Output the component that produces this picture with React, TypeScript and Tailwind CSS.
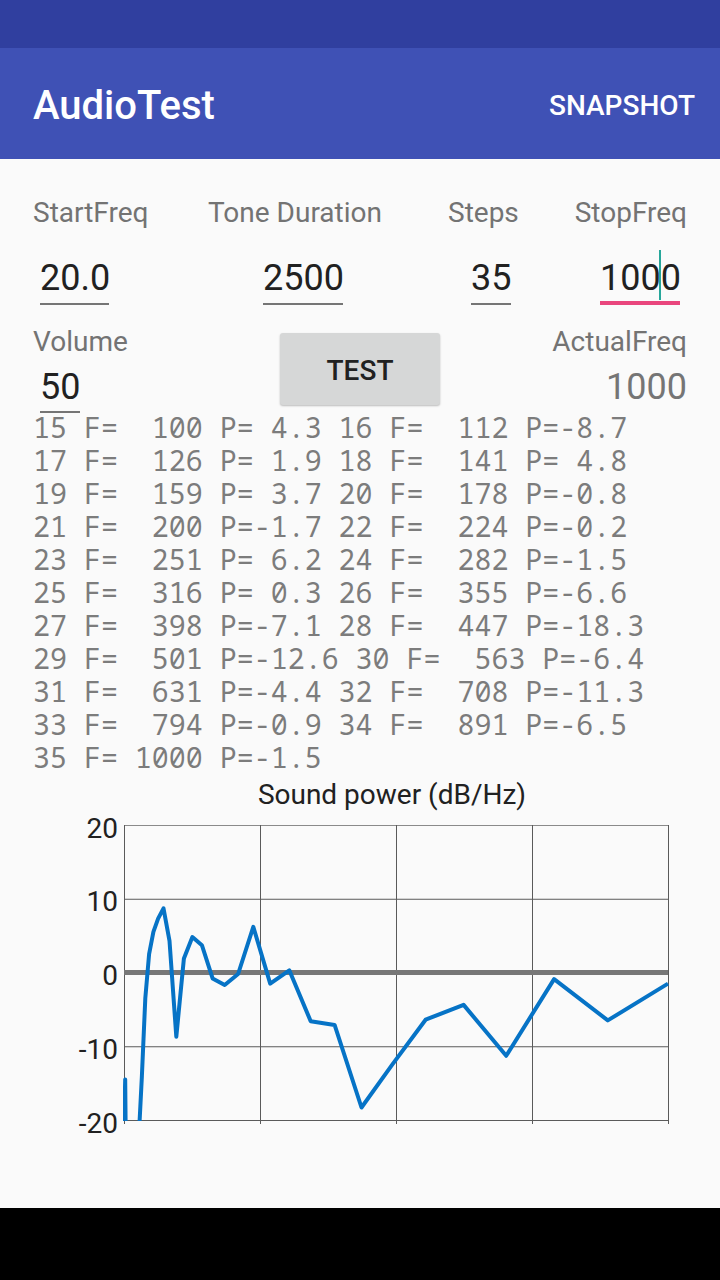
import React from 'react'

const results = [
  '15 F=  100 P= 4.3 16 F=  112 P=-8.7',
  '17 F=  126 P= 1.9 18 F=  141 P= 4.8',
  '19 F=  159 P= 3.7 20 F=  178 P=-0.8',
  '21 F=  200 P=-1.7 22 F=  224 P=-0.2',
  '23 F=  251 P= 6.2 24 F=  282 P=-1.5',
  '25 F=  316 P= 0.3 26 F=  355 P=-6.6',
  '27 F=  398 P=-7.1 28 F=  447 P=-18.3',
  '29 F=  501 P=-12.6 30 F=  563 P=-6.4',
  '31 F=  631 P=-4.4 32 F=  708 P=-11.3',
  '33 F=  794 P=-0.9 34 F=  891 P=-6.5',
  '35 F= 1000 P=-1.5',
]

// power per step, 0..35 (first 15 read off the plot)
const power = [
  -21, -14.5, -35, -35, -35, -35, -35, -35, -22, -14, -3.5, 2.5, 5.5, 7.3, 8.7,
  4.3, -8.7, 1.9, 4.8, 3.7, -0.8, -1.7, -0.2, 6.2, -1.5, 0.3, -6.6, -7.1, -18.3,
  -12.6, -6.4, -4.4, -11.3, -0.9, -6.5, -1.5,
]

function Field({ value, width, ml }: { value: string; width: string; ml: string }) {
  return (
    <div className={`${ml} ${width} pb-[6px] border-b-2 border-[#757575] text-[36px] leading-[36px] text-[#212121]`}>
      {value}
    </div>
  )
}

function PowerChart() {
  const top = 12
  const bottom = 307
  const left = 124
  const right = 668
  const yOf = (p: number) => top + ((20 - p) * (bottom - top)) / 40
  const xOf = (f: number) => left + ((f - 17.78) / (1000 - 17.78)) * (right - left)
  const points = power
    .map((p, n) => `${xOf(1000 * Math.pow(10, (n - 35) / 20)).toFixed(1)},${yOf(p).toFixed(1)}`)
    .join(' ')
  const cols = [124, 260, 396, 532, 668]
  const ticks = [20, 10, 0, -10, -20]

  return (
    <svg width="720" height="395" viewBox="0 0 720 395" className="block">
      <defs>
        <clipPath id="plot">
          <rect x={left - 1} y={top} width={right - left + 2} height={bottom - top + 1} />
        </clipPath>
      </defs>
      {ticks.map((t) => (
        <g key={t}>
          {t !== 0 && (
            <line x1={left} x2={right} y1={yOf(t) + 0.5} y2={yOf(t) + 0.5} stroke={t === 20 ? '#8a8a8a' : '#5a5a5a'} strokeWidth="1" />
          )}
          <text
            x="118"
            y={yOf(t) + 3}
            textAnchor="end"
            dominantBaseline="central"
            fontFamily="Roboto, sans-serif"
            fontSize="28"
            fill="#212121"
          >
            {t}
          </text>
        </g>
      ))}
      {cols.map((x) => (
        <line key={x} x1={x + 0.5} x2={x + 0.5} y1={top} y2={bottom + 4} stroke="#5a5a5a" strokeWidth="1" />
      ))}
      <line x1={left} x2={right} y1={yOf(0)} y2={yOf(0)} stroke="#777777" strokeWidth="5" />
      <polyline
        points={points}
        fill="none"
        stroke="#0673c6"
        strokeWidth="4"
        strokeLinejoin="round"
        clipPath="url(#plot)"
      />
    </svg>
  )
}

export default function App() {
  return (
    <div className="w-[720px] h-[1280px] flex flex-col bg-[#fafafa] font-[Roboto,sans-serif]">
      <div className="h-[48px] bg-[#303f9f]" />
      <div className="h-[112px] bg-[#3f51b5] flex items-center justify-between pl-[33px] pr-[25px] pt-[4px] text-white">
        <span className="text-[40px] font-medium">AudioTest</span>
        <span className="text-[28px] font-medium">SNAPSHOT</span>
      </div>

      <main className="flex-1 flex flex-col pt-[40px]">
        {/* labels */}
        <div className="flex px-[33px] text-[28px] leading-[28px] text-[#737373]">
          <span className="w-[175px]">StartFreq</span>
          <span className="w-[240px]">Tone Duration</span>
          <span>Steps</span>
          <span className="flex-1 text-right">StopFreq</span>
        </div>

        {/* inputs */}
        <div className="flex mt-[33px]">
          <Field value="20.0" width="w-[69px]" ml="ml-[40px]" />
          <Field value="2500" width="w-[80px]" ml="ml-[154px]" />
          <Field value="35" width="w-[40px]" ml="ml-[128px]" />
          <div className="relative ml-[89px] w-[80px] pb-[5px] border-b-4 border-[#e9467d] text-[36px] leading-[36px] text-[#212121]">
            1000
            <span className="absolute left-[59px] top-[-10px] w-[2px] h-[50px] bg-[#26a69a]" />
          </div>
        </div>

        {/* volume / test / actual */}
        <div className="flex items-start mt-[23px] px-[33px]">
          <div className="w-[247px] flex flex-col items-start">
            <span className="text-[28px] leading-[28px] text-[#737373]">Volume</span>
            <div className="mt-[13px] ml-[7px] w-[40px] pb-[6px] border-b-2 border-[#757575] text-[36px] leading-[36px] text-[#212121]">
              50
            </div>
          </div>
          <button className="mt-[5px] w-[160px] h-[72px] pt-[3px] rounded-[3px] bg-[#d6d7d7] shadow-[0_1px_2px_rgba(0,0,0,0.25)] text-[28px] font-medium text-[#212121]">
            TEST
          </button>
          <div className="flex-1 flex flex-col items-end">
            <span className="text-[28px] leading-[28px] text-[#737373]">ActualFreq</span>
            <span className="mt-[13px] text-[36px] leading-[36px] text-[#757575]">1000</span>
          </div>
        </div>

        {/* step results */}
        <div className="-mt-[2px] px-[33px] font-['Noto_Sans_Mono','Droid_Sans_Mono','DejaVu_Sans_Mono',monospace] text-[28.3px] leading-[33px] text-[#7c7c7c] whitespace-pre">
          {results.map((r) => (
            <div key={r}>{r}</div>
          ))}
        </div>

        <div className="mt-[3px] h-[36px] leading-[36px] text-[28px] text-[#212121] text-center pl-[64px]">
          Sound power (dB/Hz)
        </div>
        <PowerChart />
      </main>

      <div className="h-[72px] bg-black" />
    </div>
  )
}
